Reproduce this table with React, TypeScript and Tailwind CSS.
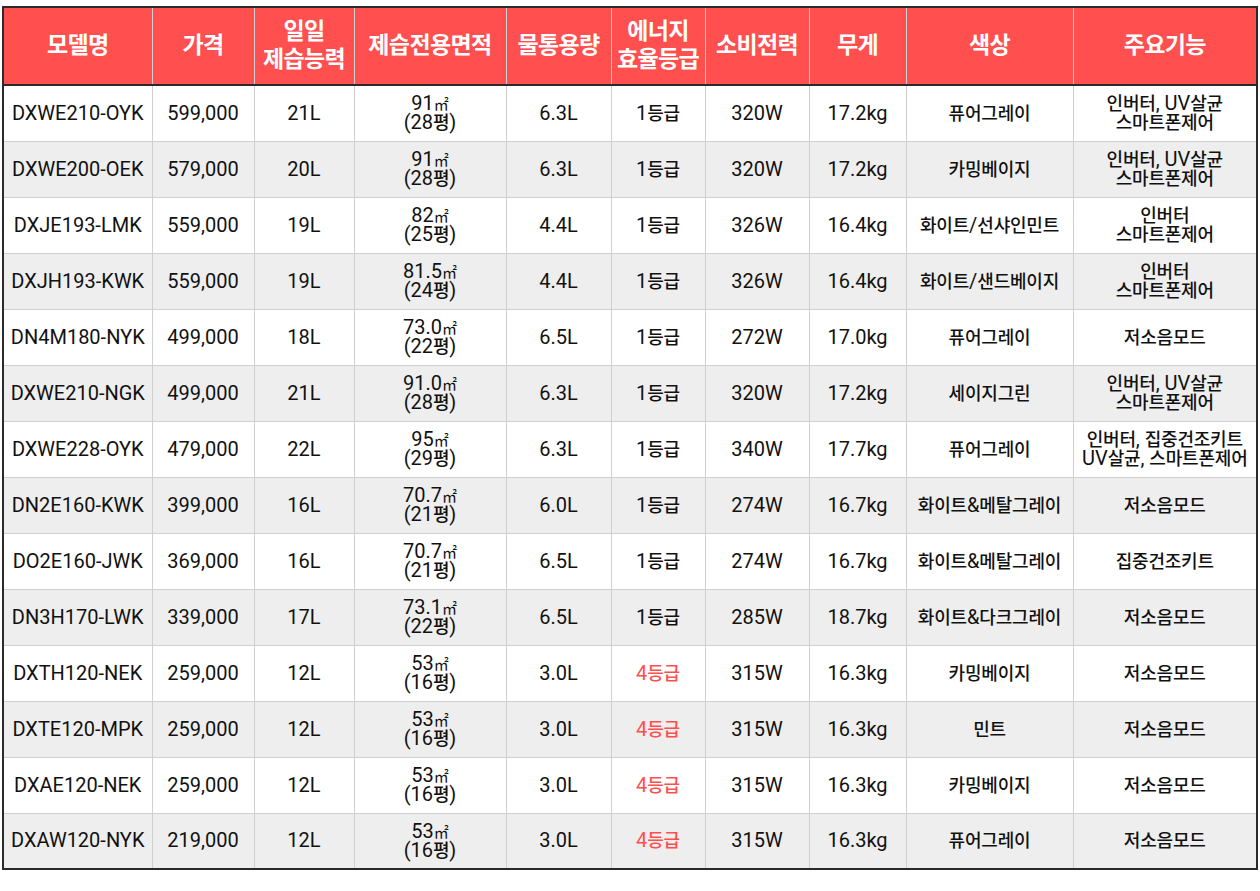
import { Fragment } from "react";

const headers: string[][] = [
  ["모델명"],
  ["가격"],
  ["일일", "제습능력"],
  ["제습전용면적"],
  ["물통용량"],
  ["에너지", "효율등급"],
  ["소비전력"],
  ["무게"],
  ["색상"],
  ["주요기능"],
];

const colWidths = ["w-[149px]", "w-[102px]", "w-[100px]", "w-[152px]", "w-[105px]", "w-[94px]", "w-[104px]", "w-[97px]", "w-[167px]", "w-[184px]"];

type Row = {
  model: string;
  price: string;
  capacity: string;
  area: string;
  pyeong: string;
  tank: string;
  grade: string;
  power: string;
  weight: string;
  color: string;
  features: string[];
};

const rows: Row[] = [
  { model: "DXWE210-OYK", price: "599,000", capacity: "21L", area: "91", pyeong: "(28평)", tank: "6.3L", grade: "1등급", power: "320W", weight: "17.2kg", color: "퓨어그레이", features: ["인버터, UV살균", "스마트폰제어"] },
  { model: "DXWE200-OEK", price: "579,000", capacity: "20L", area: "91", pyeong: "(28평)", tank: "6.3L", grade: "1등급", power: "320W", weight: "17.2kg", color: "카밍베이지", features: ["인버터, UV살균", "스마트폰제어"] },
  { model: "DXJE193-LMK", price: "559,000", capacity: "19L", area: "82", pyeong: "(25평)", tank: "4.4L", grade: "1등급", power: "326W", weight: "16.4kg", color: "화이트/선샤인민트", features: ["인버터", "스마트폰제어"] },
  { model: "DXJH193-KWK", price: "559,000", capacity: "19L", area: "81.5", pyeong: "(24평)", tank: "4.4L", grade: "1등급", power: "326W", weight: "16.4kg", color: "화이트/샌드베이지", features: ["인버터", "스마트폰제어"] },
  { model: "DN4M180-NYK", price: "499,000", capacity: "18L", area: "73.0", pyeong: "(22평)", tank: "6.5L", grade: "1등급", power: "272W", weight: "17.0kg", color: "퓨어그레이", features: ["저소음모드"] },
  { model: "DXWE210-NGK", price: "499,000", capacity: "21L", area: "91.0", pyeong: "(28평)", tank: "6.3L", grade: "1등급", power: "320W", weight: "17.2kg", color: "세이지그린", features: ["인버터, UV살균", "스마트폰제어"] },
  { model: "DXWE228-OYK", price: "479,000", capacity: "22L", area: "95", pyeong: "(29평)", tank: "6.3L", grade: "1등급", power: "340W", weight: "17.7kg", color: "퓨어그레이", features: ["인버터, 집중건조키트", "UV살균, 스마트폰제어"] },
  { model: "DN2E160-KWK", price: "399,000", capacity: "16L", area: "70.7", pyeong: "(21평)", tank: "6.0L", grade: "1등급", power: "274W", weight: "16.7kg", color: "화이트&메탈그레이", features: ["저소음모드"] },
  { model: "DO2E160-JWK", price: "369,000", capacity: "16L", area: "70.7", pyeong: "(21평)", tank: "6.5L", grade: "1등급", power: "274W", weight: "16.7kg", color: "화이트&메탈그레이", features: ["집중건조키트"] },
  { model: "DN3H170-LWK", price: "339,000", capacity: "17L", area: "73.1", pyeong: "(22평)", tank: "6.5L", grade: "1등급", power: "285W", weight: "18.7kg", color: "화이트&다크그레이", features: ["저소음모드"] },
  { model: "DXTH120-NEK", price: "259,000", capacity: "12L", area: "53", pyeong: "(16평)", tank: "3.0L", grade: "4등급", power: "315W", weight: "16.3kg", color: "카밍베이지", features: ["저소음모드"] },
  { model: "DXTE120-MPK", price: "259,000", capacity: "12L", area: "53", pyeong: "(16평)", tank: "3.0L", grade: "4등급", power: "315W", weight: "16.3kg", color: "민트", features: ["저소음모드"] },
  { model: "DXAE120-NEK", price: "259,000", capacity: "12L", area: "53", pyeong: "(16평)", tank: "3.0L", grade: "4등급", power: "315W", weight: "16.3kg", color: "카밍베이지", features: ["저소음모드"] },
  { model: "DXAW120-NYK", price: "219,000", capacity: "12L", area: "53", pyeong: "(16평)", tank: "3.0L", grade: "4등급", power: "315W", weight: "16.3kg", color: "퓨어그레이", features: ["저소음모드"] },
];

// hangul renders a touch smaller than the latin text in the original
function Ko({ text }: { text: string }) {
  const parts = text.split(/([\uAC00-\uD7A3]+)/);
  return (
    <>
      {parts.map((p, i) =>
        /[\uAC00-\uD7A3]/.test(p) ? (
          <span key={i} className="text-[18px] font-medium tracking-[-0.2px]">
            {p}
          </span>
        ) : (
          <Fragment key={i}>{p}</Fragment>
        )
      )}
    </>
  );
}

function Cell({ children, className = "" }: { children: React.ReactNode; className?: string }) {
  return (
    <td className={`h-[56px] border border-[#cfcfcf] p-0 text-center align-middle leading-[19px] ${className}`}>
      {children}
    </td>
  );
}

export default function App() {
  return (
    <div className="min-h-[891px] bg-white pl-[2px] pt-[6px] font-['Roboto','Noto_Sans_CJK_KR',sans-serif] text-[#111]">
      <table className="w-[1256px] table-fixed border-collapse border-2 border-[#2a2a2a] text-[20px] font-normal">
        <colgroup>
          {colWidths.map((w, i) => (
            <col key={i} className={w} />
          ))}
        </colgroup>
        <thead>
          <tr>
            {headers.map((h, i) => (
              <th
                key={i}
                className="h-[78px] border border-b-2 border-[#d0d0d0] border-b-[#2a2a2a] bg-[#ff4f4f] p-0 text-center align-middle text-[23px] font-bold leading-[28px] tracking-[-0.6px] text-white"
              >
                {h.map((line, j) => (
                  <div key={j}>{line}</div>
                ))}
              </th>
            ))}
          </tr>
        </thead>
        <tbody>
          {rows.map((r, i) => (
            <tr key={r.model + i} className={i % 2 === 1 ? "bg-[#eeeeee]" : "bg-white"}>
              <Cell>{r.model}</Cell>
              <Cell>{r.price}</Cell>
              <Cell>{r.capacity}</Cell>
              <Cell>
                <div className="h-[19px]">
                  {r.area}
                  <span className="text-[15px] leading-none">㎡</span>
                </div>
                <div className="h-[19px]">
                  <Ko text={r.pyeong} />
                </div>
              </Cell>
              <Cell>{r.tank}</Cell>
              <Cell className={r.grade === "4등급" ? "text-[#ff4f4f]" : ""}>
                <Ko text={r.grade} />
              </Cell>
              <Cell>{r.power}</Cell>
              <Cell>{r.weight}</Cell>
              <Cell>
                <Ko text={r.color} />
              </Cell>
              <Cell>
                {r.features.map((f, j) => (
                  <div key={j} className="h-[19px]">
                    <Ko text={f} />
                  </div>
                ))}
              </Cell>
            </tr>
          ))}
        </tbody>
      </table>
    </div>
  );
}
